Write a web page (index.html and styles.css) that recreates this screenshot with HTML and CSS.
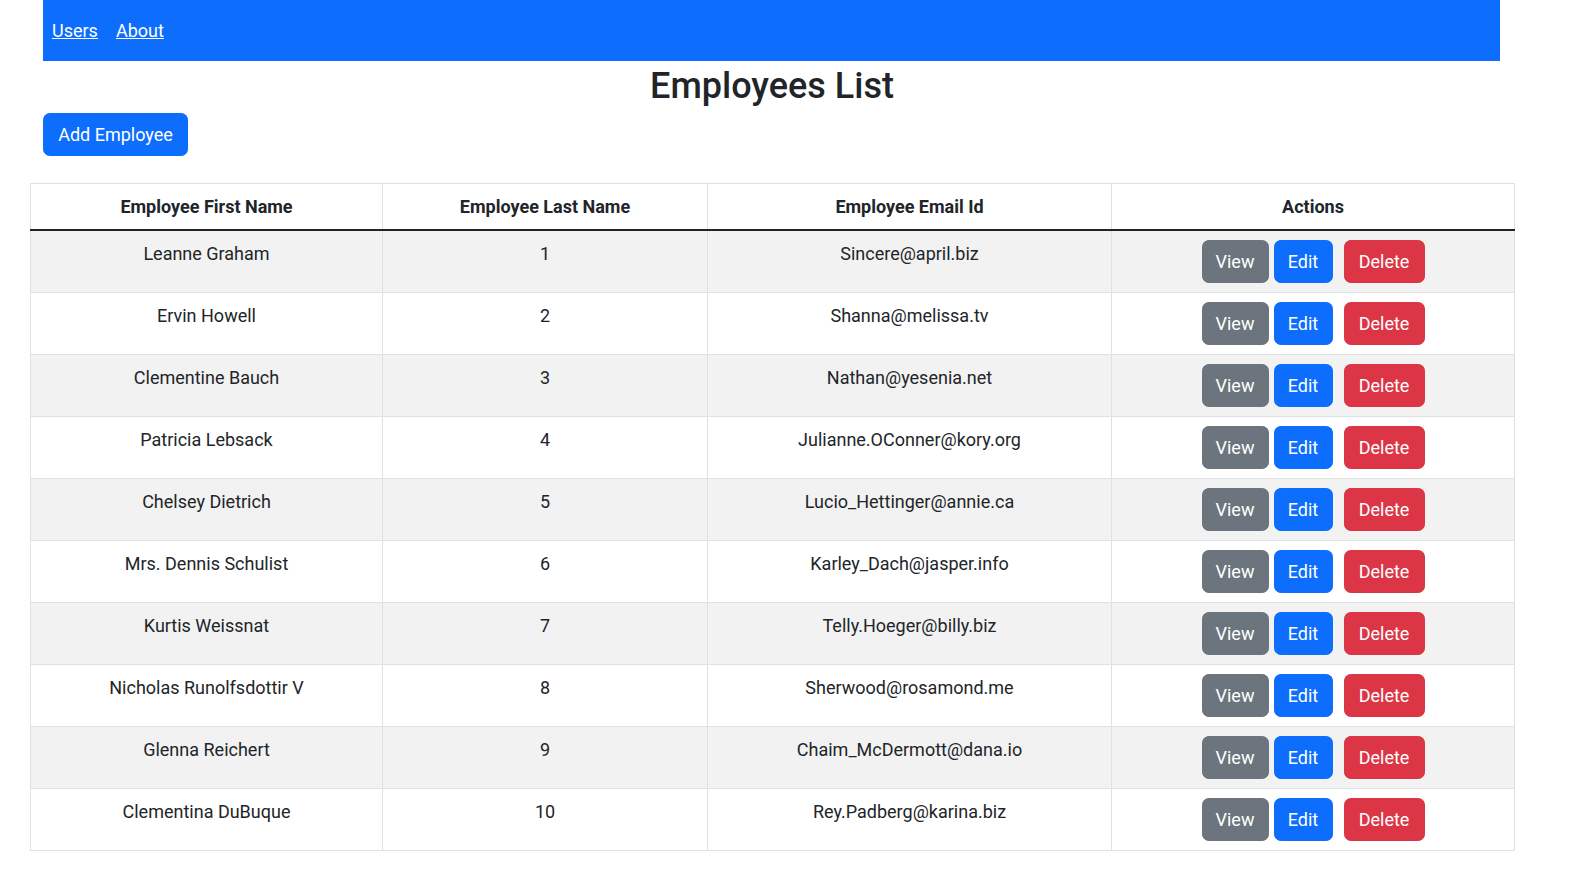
FILE: index.html
```html
<!DOCTYPE html>
<html lang="en">
<head>
<meta charset="utf-8">
<title>Employees List</title>
<link rel="stylesheet" href="styles.css">
</head>
<body>
<div class="page">
  <nav class="navbar">
    <a class="nav-link" href="#">Users</a>
    <a class="nav-link" href="#">About</a>
  </nav>
  <h2 class="title">Employees List</h2>
  <div class="toolbar">
    <button class="btn btn-primary btn-add">Add Employee</button>
  </div>
  <table class="table">
    <thead>
      <tr>
        <th class="col-first">Employee First Name</th>
        <th class="col-last">Employee Last Name</th>
        <th class="col-email">Employee Email Id</th>
        <th class="col-actions">Actions</th>
      </tr>
    </thead>
    <tbody>
      <tr><td>Leanne Graham</td><td>1</td><td>Sincere@april.biz</td><td><div class="actions"><button class="btn btn-secondary btn-view">View</button><button class="btn btn-primary btn-edit">Edit</button><button class="btn btn-danger btn-delete">Delete</button></div></td></tr>
      <tr><td>Ervin Howell</td><td>2</td><td>Shanna@melissa.tv</td><td><div class="actions"><button class="btn btn-secondary btn-view">View</button><button class="btn btn-primary btn-edit">Edit</button><button class="btn btn-danger btn-delete">Delete</button></div></td></tr>
      <tr><td>Clementine Bauch</td><td>3</td><td>Nathan@yesenia.net</td><td><div class="actions"><button class="btn btn-secondary btn-view">View</button><button class="btn btn-primary btn-edit">Edit</button><button class="btn btn-danger btn-delete">Delete</button></div></td></tr>
      <tr><td>Patricia Lebsack</td><td>4</td><td>Julianne.OConner@kory.org</td><td><div class="actions"><button class="btn btn-secondary btn-view">View</button><button class="btn btn-primary btn-edit">Edit</button><button class="btn btn-danger btn-delete">Delete</button></div></td></tr>
      <tr><td>Chelsey Dietrich</td><td>5</td><td>Lucio_Hettinger@annie.ca</td><td><div class="actions"><button class="btn btn-secondary btn-view">View</button><button class="btn btn-primary btn-edit">Edit</button><button class="btn btn-danger btn-delete">Delete</button></div></td></tr>
      <tr><td>Mrs. Dennis Schulist</td><td>6</td><td>Karley_Dach@jasper.info</td><td><div class="actions"><button class="btn btn-secondary btn-view">View</button><button class="btn btn-primary btn-edit">Edit</button><button class="btn btn-danger btn-delete">Delete</button></div></td></tr>
      <tr><td>Kurtis Weissnat</td><td>7</td><td>Telly.Hoeger@billy.biz</td><td><div class="actions"><button class="btn btn-secondary btn-view">View</button><button class="btn btn-primary btn-edit">Edit</button><button class="btn btn-danger btn-delete">Delete</button></div></td></tr>
      <tr><td>Nicholas Runolfsdottir V</td><td>8</td><td>Sherwood@rosamond.me</td><td><div class="actions"><button class="btn btn-secondary btn-view">View</button><button class="btn btn-primary btn-edit">Edit</button><button class="btn btn-danger btn-delete">Delete</button></div></td></tr>
      <tr><td>Glenna Reichert</td><td>9</td><td>Chaim_McDermott@dana.io</td><td><div class="actions"><button class="btn btn-secondary btn-view">View</button><button class="btn btn-primary btn-edit">Edit</button><button class="btn btn-danger btn-delete">Delete</button></div></td></tr>
      <tr><td>Clementina DuBuque</td><td>10</td><td>Rey.Padberg@karina.biz</td><td><div class="actions"><button class="btn btn-secondary btn-view">View</button><button class="btn btn-primary btn-edit">Edit</button><button class="btn btn-danger btn-delete">Delete</button></div></td></tr>
    </tbody>
  </table>
</div>
</body>
</html>
```

FILE: styles.css
```css
* { box-sizing: border-box; }

html, body {
  margin: 0;
  padding: 0;
  background: #fff;
}

body {
  font-family: Roboto, "Noto Sans", sans-serif;
  font-size: 18px;
  line-height: 27px;
  color: #212529;
}

.page {
  width: 1544px;
}

.navbar {
  margin-left: 43px;
  width: 1457px;
  height: 61px;
  background: #0d6efd;
  display: flex;
  align-items: center;
  gap: 18px;
  padding-left: 9px;
}

.nav-link {
  color: #fff;
  text-decoration: underline;
  font-size: 18px;
}

.title {
  margin: 4px 0 5px 0;
  text-align: center;
  font-size: 36px;
  line-height: 43px;
  font-weight: 500;
}

.toolbar {
  padding-left: 43px;
  margin-bottom: 27px;
}

.btn {
  display: inline-block;
  font-family: inherit;
  font-size: 18px;
  line-height: 27px;
  height: 43px;
  padding: 0;
  border: 1px solid transparent;
  border-radius: 6.75px;
  color: #fff;
  text-align: center;
  cursor: pointer;
}

.btn-primary { background: #0d6efd; border-color: #0d6efd; }
.btn-secondary { background: #6c757d; border-color: #6c757d; }
.btn-danger { background: #dc3545; border-color: #dc3545; }

.btn-add { width: 145px; }
.btn-view { width: 67px; margin-right: 5px; }
.btn-edit { width: 59px; margin-right: 11px; }
.btn-delete { width: 81px; }

.table {
  margin-left: 30px;
  width: 1484px;
  border-collapse: collapse;
  table-layout: fixed;
  border: 1px solid #dee2e6;
}

.col-first { width: 352px; }
.col-last { width: 325px; }
.col-email { width: 404px; }
.col-actions { width: 403px; }

.table th,
.table td {
  border: 1px solid #dee2e6;
  padding: 9px;
  text-align: center;
  vertical-align: top;
}

.table th {
  font-weight: 700;
  height: 46px;
}

.table thead th {
  border-bottom: 2px solid #212529;
}

.table td {
  height: 62px;
}

.table tbody tr:nth-child(odd) td {
  background: #f2f2f2;
}

.actions {
  display: flex;
  justify-content: center;
}
```
